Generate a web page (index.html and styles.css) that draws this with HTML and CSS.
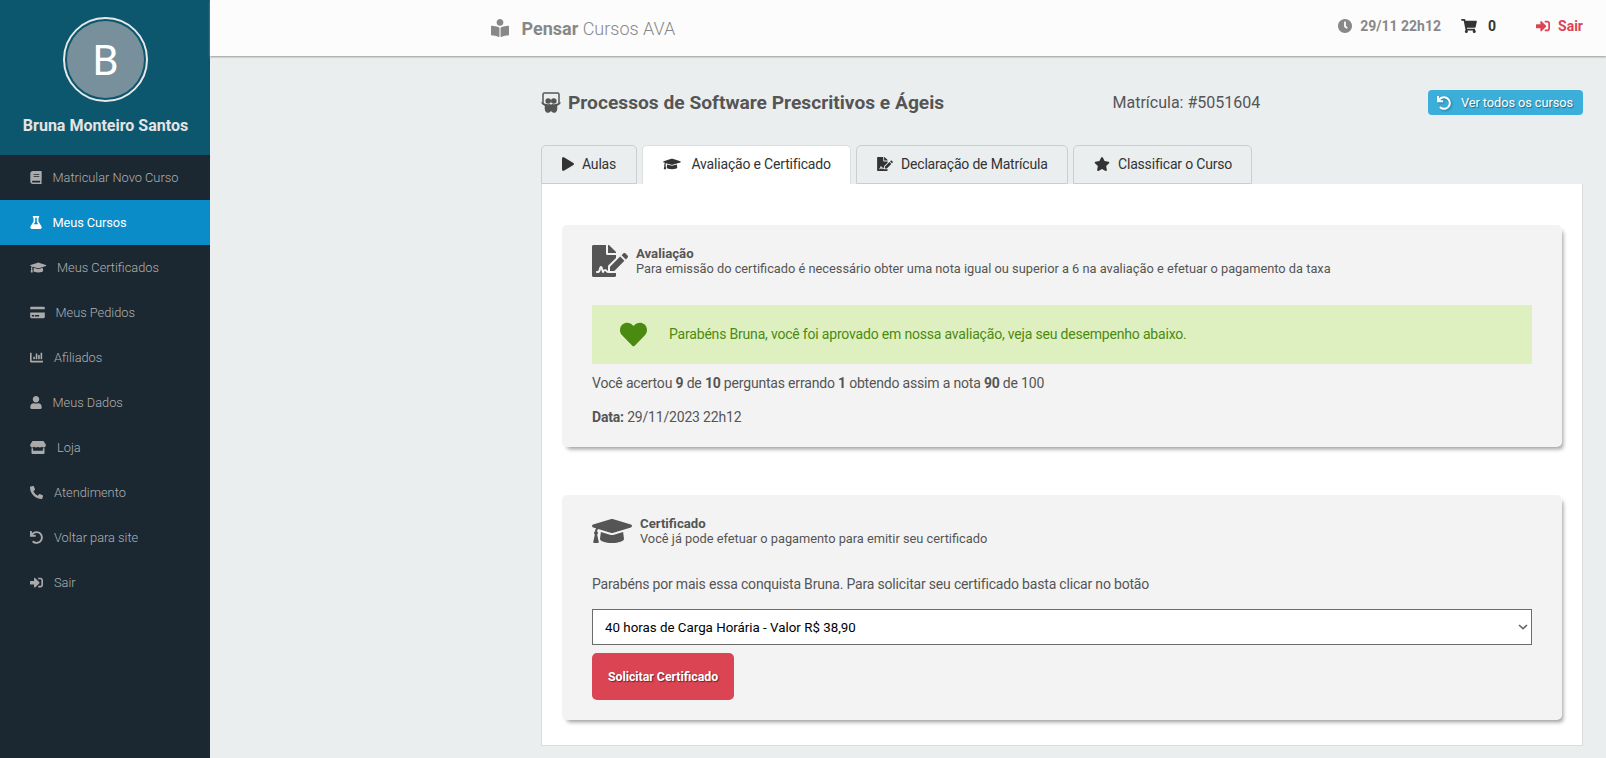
FILE: index.html
```html
<!DOCTYPE html>
<html lang="pt-BR">
<head>
<meta charset="utf-8">
<title>Pensar Cursos AVA</title>
<link rel="stylesheet" href="styles.css">
</head>
<body>
<svg class="sprite" aria-hidden="true">
  <symbol id="cap" viewBox="0 0 640 512"><path d="M622.34 153.2L343.4 67.5c-15.2-4.67-31.6-4.67-46.79 0L17.66 153.2c-23.54 7.23-23.54 38.36 0 45.59l48.63 14.94c-10.67 13.19-17.23 29.28-17.88 46.9C38.78 266.15 32 276.11 32 288c0 10.78 5.68 19.85 13.86 25.65L20.33 428.53C18.11 438.52 25.71 448 35.94 448h56.11c10.24 0 17.84-9.48 15.62-19.47L82.14 313.65C90.32 307.85 96 298.78 96 288c0-11.57-6.47-21.25-15.66-26.87.76-15.02 8.44-28.3 20.69-36.72L296.6 284.5c9.06 2.78 26.44 6.25 46.79 0l278.95-85.7c23.55-7.24 23.55-38.36 0-45.6zM352.79 315.09c-28.53 8.76-52.84 3.92-65.59 0l-145.02-44.55L128 384c0 35.35 85.96 64 192 64s192-28.65 192-64l-14.18-113.47-145.03 44.56z"/></symbol>
  <symbol id="undo" viewBox="0 0 512 512"><path d="M212.333 224.333H12c-6.627 0-12-5.373-12-12V12C0 5.373 5.373 0 12 0h48c6.627 0 12 5.373 12 12v78.112C117.773 39.279 184.26 7.47 258.175 8.007c136.906.994 246.448 111.623 246.157 248.532C504.041 393.258 393.12 504 256.333 504c-64.089 0-122.496-24.313-166.51-64.215-5.099-4.622-5.334-12.554-.467-17.42l33.967-33.967c4.474-4.474 11.662-4.717 16.401-.525C170.76 415.336 211.58 432 256.333 432c97.268 0 176-78.716 176-176 0-97.267-78.716-176-176-176-58.496 0-110.28 28.476-142.274 72.333h98.274c6.627 0 12 5.373 12 12v48c0 6.627-5.373 12-12 12z"/></symbol>
  <symbol id="signin" viewBox="0 0 512 512"><path d="M416 448h-84c-6.6 0-12-5.4-12-12v-40c0-6.6 5.4-12 12-12h84c17.7 0 32-14.3 32-32V160c0-17.7-14.3-32-32-32h-84c-6.6 0-12-5.4-12-12V76c0-6.6 5.4-12 12-12h84c53 0 96 43 96 96v192c0 53-43 96-96 96zm-47-201L201 79c-15-15-41-4.5-41 17v96H24c-13.3 0-24 10.7-24 24v96c0 13.3 10.7 24 24 24h136v96c0 21.5 26 32 41 17l168-168c9.3-9.4 9.3-24.6 0-34z"/></symbol>
  <symbol id="sign" viewBox="0 0 576 512"><path d="M218.17 424.14c-2.95-5.92-8.09-6.52-10.17-6.52s-7.22.59-10.02 6.19l-7.67 15.34c-6.37 12.78-25.03 11.37-29.48-2.09L144 386.59l-10.61 31.88c-5.89 17.66-22.38 29.53-41 29.53H80c-8.84 0-16-7.16-16-16s7.16-16 16-16h12.39c4.83 0 9.11-3.08 10.64-7.66l18.19-54.64c3.3-9.81 12.44-16.41 22.78-16.41s19.48 6.59 22.77 16.41l13.88 41.64c19.75-16.19 54.06-9.7 66 14.16 1.89 3.78 5.49 5.95 9.36 6.26v-82.12l128-127.09V160H248c-13.2 0-24-10.8-24-24V0H24C10.7 0 0 10.7 0 24v464c0 13.3 10.7 24 24 24h336c13.3 0 24-10.7 24-24v-40l-128-.11c-16.12-.31-30.58-9.28-37.83-23.75zM384 121.9c0-6.3-2.5-12.4-7-16.9L279.1 7c-4.5-4.5-10.6-7-17-7H256v128h128v-6.1zm-96 225.06V416h68.99l161.68-162.78-67.88-67.88L288 346.96zm280.54-179.63l-31.87-31.87c-9.94-9.94-26.07-9.94-36.01 0l-27.25 27.25 67.88 67.88 27.25-27.25c9.95-9.94 9.95-26.07 0-36.01z"/></symbol>
</svg>
<div class="app">
  <aside class="sidebar">
    <div class="profile">
      <div class="avatar"><span class="avatar-letter">B</span></div>
      <div class="profile-name">Bruna Monteiro Santos</div>
    </div>
    <nav class="menu">
      <a class="menu-item"><svg class="icon w448" viewBox="0 0 448 512"><path d="M448 360V24c0-13.3-10.7-24-24-24H96C43 0 0 43 0 96v320c0 53 43 96 96 96h328c13.3 0 24-10.7 24-24v-16c0-7.5-3.5-14.3-8.9-18.7-4.2-15.4-4.2-59.3 0-74.7 5.4-4.3 8.9-11.1 8.9-18.6zM128 134c0-3.3 2.7-6 6-6h212c3.3 0 6 2.7 6 6v20c0 3.3-2.7 6-6 6H134c-3.3 0-6-2.7-6-6v-20zm0 64c0-3.3 2.7-6 6-6h212c3.3 0 6 2.7 6 6v20c0 3.3-2.7 6-6 6H134c-3.3 0-6-2.7-6-6v-20zm253.4 250H96c-17.7 0-32-14.3-32-32 0-17.6 14.4-32 32-32h285.4c-1.9 17.1-1.9 46.9 0 64z"/></svg>Matricular Novo Curso</a>
      <a class="menu-item current"><svg class="icon w448" viewBox="0 0 448 512"><path d="M437.2 403.5L320 215V64h8c13.3 0 24-10.7 24-24V24c0-13.3-10.7-24-24-24H120c-13.3 0-24 10.7-24 24v16c0 13.3 10.7 24 24 24h8v151L10.8 403.5C-18.5 450.6 15.3 512 70.9 512h306.2c55.7 0 89.4-61.5 60.1-108.5zM137.9 320l48.2-77.6c3.7-5.2 5.8-11.6 5.8-18.4V64h64v160c0 6.9 2.2 13.2 5.8 18.4l48.2 77.6h-172z"/></svg>Meus Cursos</a>
      <a class="menu-item"><svg class="icon w640"><use href="#cap"/></svg>Meus Certificados</a>
      <a class="menu-item"><svg class="icon w576" viewBox="0 0 576 512"><path d="M0 432c0 26.5 21.5 48 48 48h480c26.5 0 48-21.5 48-48V256H0v176zm192-68c0-6.6 5.4-12 12-12h136c6.6 0 12 5.4 12 12v40c0 6.6-5.4 12-12 12H204c-6.6 0-12-5.4-12-12v-40zm-128 0c0-6.6 5.4-12 12-12h72c6.6 0 12 5.4 12 12v40c0 6.6-5.4 12-12 12H76c-6.6 0-12-5.4-12-12v-40zM576 80v48H0V80c0-26.5 21.5-48 48-48h480c26.5 0 48 21.5 48 48z"/></svg>Meus Pedidos</a>
      <a class="menu-item"><svg class="icon" viewBox="0 0 512 512"><path d="M332.8 320h38.4c6.4 0 12.8-6.4 12.8-12.8V172.8c0-6.4-6.4-12.8-12.8-12.8h-38.4c-6.4 0-12.8 6.4-12.8 12.8v134.4c0 6.4 6.4 12.8 12.8 12.8zm96 0h38.4c6.4 0 12.8-6.4 12.8-12.8V76.8c0-6.4-6.4-12.8-12.8-12.8h-38.4c-6.4 0-12.8 6.4-12.8 12.8v230.4c0 6.4 6.4 12.8 12.8 12.8zm-288 0h38.4c6.4 0 12.8-6.4 12.8-12.8v-70.4c0-6.4-6.4-12.8-12.8-12.8h-38.4c-6.4 0-12.8 6.4-12.8 12.8v70.4c0 6.4 6.4 12.8 12.8 12.8zm96 0h38.4c6.4 0 12.8-6.4 12.8-12.8V108.8c0-6.4-6.4-12.8-12.8-12.8h-38.4c-6.4 0-12.8 6.4-12.8 12.8v198.4c0 6.4 6.4 12.8 12.8 12.8zM496 384H64V80c0-8.84-7.16-16-16-16H16C7.16 64 0 71.16 0 80v336c0 17.67 14.33 32 32 32h464c8.84 0 16-7.16 16-16v-32c0-8.84-7.16-16-16-16z"/></svg>Afiliados</a>
      <a class="menu-item"><svg class="icon w448" viewBox="0 0 448 512"><path d="M224 256c70.7 0 128-57.3 128-128S294.7 0 224 0 96 57.3 96 128s57.3 128 128 128zm89.6 32h-16.7c-22.2 10.2-46.9 16-72.9 16s-50.6-5.8-72.9-16h-16.7C60.2 288 0 348.2 0 422.4V464c0 26.5 21.5 48 48 48h352c26.5 0 48-21.5 48-48v-41.6c0-74.2-60.2-134.4-134.4-134.4z"/></svg>Meus Dados</a>
      <a class="menu-item"><svg class="icon w616" viewBox="0 0 616 512"><path d="M602 118.6L537.1 15C531.3 5.7 521 0 510 0H106C95 0 84.7 5.7 78.9 15L14 118.6c-33.5 53.5-3.8 127.9 58.8 136.4 4.5.6 9.1.9 13.7.9 29.6 0 55.8-13 73.8-33.1 18 20.1 44.3 33.1 73.8 33.1 29.6 0 55.8-13 73.8-33.1 18 20.1 44.3 33.1 73.8 33.1 29.6 0 55.8-13 73.8-33.1 18.1 20.1 44.3 33.1 73.8 33.1 4.7 0 9.2-.3 13.7-.9 62.8-8.4 92.6-82.8 59-136.4zM529.5 288c-10 0-19.9-1.5-29.5-3.8V384H116v-99.8c-9.6 2.2-19.5 3.8-29.5 3.8-6 0-12.1-.4-18-1.2-5.6-.8-11.1-2.1-16.4-3.6V480c0 17.7 14.3 32 32 32h448c17.7 0 32-14.3 32-32V283.2c-5.4 1.6-10.8 2.9-16.4 3.6-6.1.8-12.1 1.2-18.2 1.2z"/></svg>Loja</a>
      <a class="menu-item"><svg class="icon" viewBox="0 0 512 512"><path d="M497.39 361.8l-112-48a24 24 0 0 0-28 6.9l-49.6 60.6A370.66 370.66 0 0 1 130.6 204.11l60.6-49.6a23.94 23.94 0 0 0 6.9-28l-48-112A24.16 24.16 0 0 0 122.6.61l-104 24A24 24 0 0 0 0 48c0 256.5 207.9 464 464 464a24 24 0 0 0 23.4-18.6l24-104a24.29 24.29 0 0 0-14.01-27.6z"/></svg>Atendimento</a>
      <a class="menu-item"><svg class="icon"><use href="#undo"/></svg>Voltar para site</a>
      <a class="menu-item"><svg class="icon"><use href="#signin"/></svg>Sair</a>
    </nav>
  </aside>

  <div class="page">
    <header class="topbar">
      <div class="brand">
        <svg class="brand-icon" viewBox="0 0 512 512"><path d="M352 96c0-53.02-42.98-96-96-96s-96 42.98-96 96 42.98 96 96 96 96-42.98 96-96zM233.59 241.1c-59.33-36.32-155.43-46.3-203.79-49.05C13.55 191.13 0 203.51 0 219.14v222.8c0 14.33 11.59 26.28 26.49 27.05 43.66 2.29 131.99 10.68 193.04 41.43 9.37 4.72 20.48-1.71 20.48-11.87V252.56c-.01-4.67-2.32-8.95-6.42-11.46zm248.61-49.05c-48.35 2.74-144.46 12.73-203.78 49.05-4.1 2.51-6.41 6.96-6.41 11.63v245.79c0 10.19 11.14 16.63 20.54 11.9 61.04-30.72 149.32-39.11 192.97-41.4 14.9-.78 26.49-12.73 26.49-27.06V219.14c-.01-15.63-13.56-28.01-29.81-27.09z"/></svg>
        <span class="brand-name"><b>Pensar</b> Cursos AVA</span>
      </div>
      <div class="status">
        <span class="clock"><svg class="icon14" viewBox="8 8 496 496"><path d="M256,8C119,8,8,119,8,256S119,504,256,504,504,393,504,256,393,8,256,8Zm92.49,313h0l-20,25a16,16,0,0,1-22.49,2.5h0l-67-49.72a40,40,0,0,1-15-31.23V112a16,16,0,0,1,16-16h32a16,16,0,0,1,16,16V256l58,42.5A16,16,0,0,1,348.49,321Z"/></svg>29/11 22h12</span>
        <span class="cart"><svg class="icon16" viewBox="0 0 576 512"><path d="M528.12 301.319l47.273-208C578.806 78.301 567.391 64 551.99 64H159.208l-9.166-44.81C147.758 8.021 137.93 0 126.529 0H24C10.745 0 0 10.745 0 24v16c0 13.255 10.745 24 24 24h69.883l70.248 343.435C147.325 417.1 136 435.222 136 456c0 30.928 25.072 56 56 56s56-25.072 56-56c0-15.674-6.447-29.835-16.824-40h209.647C430.447 426.165 424 440.326 424 456c0 30.928 25.072 56 56 56s56-25.072 56-56c0-22.172-12.888-41.332-31.579-50.405l5.517-24.276c3.413-15.018-8.002-29.319-23.403-29.319H218.117l-6.545-32h293.145c11.206 0 20.92-7.754 23.403-18.681z"/></svg>0</span>
        <span class="logout"><svg class="icon14"><use href="#signin"/></svg>Sair</span>
      </div>
    </header>

    <main class="content">
      <div class="heading">
        <svg class="heading-icon" viewBox="0 0 20 21"><path d="M2 11.2V2.4Q2 1 3.4 1H16.6Q18 1 18 2.4V11.2" fill="none" stroke="currentColor" stroke-width="1.5"/><circle cx="7.2" cy="9" r="2.8"/><circle cx="12.8" cy="9" r="2.8"/><path d="M.1 10.7Q.5 10.1 1.3 10.6Q5 12.7 7.7 12.2Q9.2 11.8 10 12.7Q10.8 11.8 12.3 12.2Q15 12.7 18.7 10.6Q19.5 10.1 19.9 10.7Q19 12.8 16.1 14Q17 19.6 14.2 20.7Q11.5 21.3 10.8 19.6H9.2Q8.5 21.3 5.8 20.7Q3 19.6 3.9 14Q1 12.8.1 10.7Z"/></svg>
        <h1 class="title">Processos de Software Prescritivos e Ágeis</h1>
        <span class="enrollment">Matrícula: #5051604</span>
        <a class="all-courses"><svg class="icon14 shadowed"><use href="#undo"/></svg>Ver todos os cursos</a>
      </div>

      <div class="tabs">
        <a class="tab aulas"><svg class="tab-icon w448" viewBox="0 0 448 512"><path d="M424.4 214.7L72.4 6.6C43.8-10.3 0 6.1 0 47.9V464c0 37.5 40.7 60.1 72.4 41.3l352-208c31.4-18.5 31.5-64.1 0-82.6z"/></svg>Aulas</a>
        <a class="tab exam active"><svg class="tab-icon w640"><use href="#cap"/></svg>Avaliação e Certificado</a>
        <a class="tab statement"><svg class="tab-icon w576"><use href="#sign"/></svg>Declaração de Matrícula</a>
        <a class="tab rating"><svg class="tab-icon w576" viewBox="0 0 576 512"><path d="M259.3 17.8L194 150.2 47.9 171.5c-26.2 3.8-36.7 36.1-17.7 54.6l105.7 103-25 145.5c-4.5 26.3 23.2 46 46.4 33.7L288 439.6l130.7 68.7c23.2 12.2 50.9-7.4 46.4-33.7l-25-145.5 105.7-103c19-18.5 8.5-50.8-17.7-54.6L382 150.2 316.7 17.8c-11.7-23.6-45.6-23.9-57.4 0z"/></svg>Classificar o Curso</a>
      </div>

      <div class="panel">
        <section class="card evaluation">
          <div class="card-head">
            <svg class="card-icon w576"><use href="#sign"/></svg>
            <div><h2 class="card-title">Avaliação</h2><p class="card-sub">Para emissão do certificado é necessário obter uma nota igual ou superior a 6 na avaliação e efetuar o pagamento da taxa</p></div>
          </div>
          <div class="success">
            <svg class="heart" viewBox="0 0 512 512"><path d="M462.3 62.6C407.5 15.9 326 24.3 275.7 76.2L256 96.5l-19.7-20.3C186.1 24.3 104.5 15.9 49.7 62.6c-62.8 53.6-66.1 149.8-9.9 207.9l193.5 199.8c12.5 12.9 32.8 12.9 45.3 0l193.5-199.8c56.3-58.1 53-154.3-9.8-207.9z"/></svg>
            <span class="success-text">Parabéns Bruna, você foi aprovado em nossa avaliação, veja seu desempenho abaixo.</span>
          </div>
          <p class="line">Você acertou <b>9</b> de <b>10</b> perguntas errando <b>1</b> obtendo assim a nota <b>90</b> de 100</p>
          <p class="line date"><b>Data:</b> 29/11/2023 22h12</p>
        </section>

        <section class="card certificate">
          <div class="card-head">
            <svg class="card-icon w640"><use href="#cap"/></svg>
            <div><h2 class="card-title">Certificado</h2><p class="card-sub">Você já pode efetuar o pagamento para emitir seu certificado</p></div>
          </div>
          <p class="line congrats">Parabéns por mais essa conquista Bruna. Para solicitar seu certificado basta clicar no botão</p>
          <div class="select"><span>40 horas de Carga Horária - Valor R$ 38,90</span><svg class="chevron" viewBox="0 0 10 6"><path d="M1 1L5 4.7L9 1" fill="none" stroke="#6b6b6b" stroke-width="1.7"/></svg></div>
          <button class="request">Solicitar Certificado</button>
        </section>
      </div>
    </main>
  </div>
</div>
</body>
</html>
```
FILE: styles.css
```css
* { box-sizing: border-box; margin: 0; padding: 0; }
body { font-family: Roboto, "Liberation Sans", sans-serif; font-size: 14px; color: #555; background: #eaeeef; overflow: hidden; }
svg { fill: currentColor; flex: none; display: block; }
.sprite { display: none; }
.app { display: flex; height: 758px; }

.sidebar { width: 210px; flex: none; background: #1b2831; }
.profile { height: 155px; background: #0c576e; display: flex; flex-direction: column; align-items: center; padding: 17px 0 0 1px; }
.avatar { width: 85px; height: 85px; border: 2px solid #e8e8e8; border-radius: 50%; padding: 2px; }
.avatar-letter { display: flex; align-items: center; justify-content: center; width: 77px; height: 77px; border-radius: 50%; background: #78909c; color: #fff; font-size: 42px; padding-top: 2px; }
.profile-name { margin-top: 14px; font-size: 16px; line-height: 20px; font-weight: 700; color: #e4e4e4; }
.menu-item { display: flex; align-items: center; height: 45px; padding-left: 30px; font-size: 12.8px; font-weight: 300; color: #b0b0b0; }
.menu-item.current { background: #0a8cc8; color: #fff; font-weight: 400; letter-spacing: -.1px; }
.icon { width: 13px; height: 13px; margin-right: 11px; color: #aaa; }
.current .icon { color: #fff; }
.icon.w448 { width: 12px; margin-right: 10.5px; }
.icon.w576 { width: 15px; margin-right: 10.5px; }
.icon.w616 { width: 16px; }
.icon.w640 { width: 16.5px; margin-right: 10.5px; }

.page { flex: 1; display: flex; flex-direction: column; }
.topbar { height: 56px; background: #fcfcfc; box-shadow: 0 1px 2px #999; display: flex; justify-content: space-between; padding: 0 23px 0 281px; }
.brand { display: flex; align-items: center; gap: 12.5px; color: #888; }
.brand-icon { width: 18px; height: 18px; }
.brand-name { font-size: 18px; font-weight: 300; }
.brand-name b { font-weight: 700; }
.status { display: flex; align-items: center; height: 52px; font-weight: 700; }
.status span { display: flex; align-items: center; }
.clock { color: #888; gap: 8px; margin-right: 20px; }
.cart { color: #333; gap: 11px; margin-right: 40px; }
.logout { color: #da4453; gap: 8px; }
.icon14 { width: 14px; height: 14px; }
.icon16 { width: 16px; height: 14px; }

.content { padding: 34px 23px 0 331px; }
.heading { display: flex; align-items: center; height: 25px; }
.heading-icon { width: 20px; height: 21px; margin-right: 7px; }
.title { width: 544.5px; font-size: 19.2px; font-weight: 700; white-space: nowrap; }
.enrollment { font-size: 16px; }
.all-courses { margin-left: auto; display: flex; align-items: center; gap: 10px; width: 155px; height: 25px; padding-left: 9px; border-radius: 4px; background: #3bafda; color: #fff; font-size: 12.8px; letter-spacing: -.08px; white-space: nowrap; text-shadow: 1px 1px 1px rgba(0,0,0,.4); }
.shadowed { filter: drop-shadow(1px 1px 1px rgba(0,0,0,.3)); }

.tabs { display: flex; gap: 5px; margin-top: 30px; }
.tab { display: flex; align-items: center; height: 39px; padding: 0 0 1px 20px; border: 1px solid #c9cece; border-radius: 5px 5px 0 0; color: #333; letter-spacing: -.185px; white-space: nowrap; }
.tab.active { background: #fff; border-color: #dcdfe0; border-bottom-color: #fff; }
.aulas { width: 96px; }
.exam { width: 209px; }
.statement { width: 212px; }
.rating { width: 179px; }
.tab-icon { height: 14px; margin-right: 8px; }
.tab-icon.w448 { width: 12px; }
.tab-icon.w576 { width: 16px; }
.tab-icon.w640 { width: 18px; margin-right: 10.5px; }

.panel { height: 562px; background: #fff; border: 1px solid #dcdcdc; border-top: 0; padding: 41px 20px 0; }
.card { background: #f3f3f3; border-radius: 5px; padding: 20px 30px 0; box-shadow: 3px 4px 4px -2px rgba(0,0,0,.4); }
.evaluation { height: 222px; }
.certificate { height: 225px; margin-top: 48px; }
.card-head { display: flex; align-items: center; height: 32px; }
.card-head > div { margin-left: 8px; }
.card-icon { height: 32px; }
.card-icon.w576 { width: 36px; }
.card-icon.w640 { width: 40px; }
.card-title { font-size: 13.2px; line-height: 15px; font-weight: 700; }
.card-sub { font-size: 12.8px; line-height: 15px; }
.success { display: flex; align-items: center; height: 59px; margin-top: 28px; padding-left: 28px; gap: 22px; background: #dff0c0; color: #4b8a10; }
.success-text { letter-spacing: -.188px; padding-bottom: 1px; }
.heart { width: 27px; height: 27px; }
.line { line-height: 20px; margin-top: 9px; letter-spacing: -.185px; }
.line.date { margin-top: 14px; }
.line.congrats { margin-top: 27px; }
.select { display: flex; align-items: center; justify-content: space-between; height: 36px; margin-top: 15px; padding: 0 3px 0 12px; border: 1px solid #6b6b6b; background: #fff; color: #000; font-size: 13.33px; }
.chevron { width: 10px; height: 6px; }
.request { display: block; width: 142px; height: 47px; margin-top: 8px; border: 0; border-radius: 5px; background: #da4453; color: #fff; font: 700 12.3px Roboto, sans-serif; text-shadow: 1px 1px 1px rgba(0,0,0,.5); }
```
